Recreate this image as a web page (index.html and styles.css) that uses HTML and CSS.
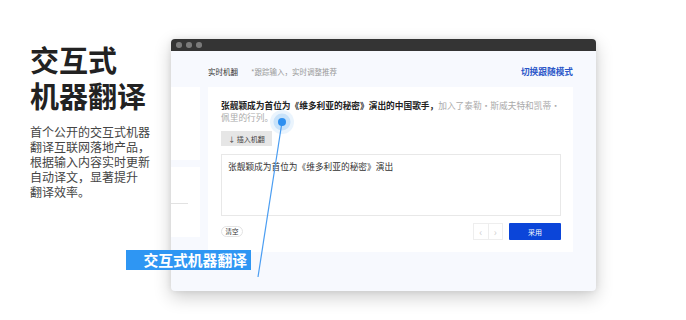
FILE: index.html
```html
<!DOCTYPE html>
<html lang="zh-CN">
<head>
    <meta charset="UTF-8">
    <meta name="viewport" content="width=device-width, initial-scale=1.0">
    <title>交互式机器翻译</title>
    <link rel="stylesheet" href="styles.css">
</head>
<body>
    <div class="page">
        <!-- Intro text -->
        <div class="intro">
            <h1>交互式<br>机器翻译</h1>
            <p>首个公开的交互式机器<br>翻译互联网落地产品，<br>根据输入内容实时更新<br>自动译文，显著提升<br>翻译效率。</p>
        </div>

        <!-- App window -->
        <div class="window">
            <div class="titlebar">
                <span class="dot"></span>
                <span class="dot"></span>
                <span class="dot"></span>
            </div>
            <div class="window-body">
                <div class="header">
                    <span class="mode">实时机翻</span>
                    <span class="hint">*跟踪输入，实时调整推荐</span>
                    <span class="switch">切换跟随模式</span>
                </div>
                <div class="content">
                    <div class="sidebar">
                        <div class="side-block"></div>
                        <div class="side-block lined"></div>
                    </div>
                    <div class="card">
                        <p class="suggest"><b>张靓颖成为首位为《维多利亚的秘密》演出的中国歌手，</b><span class="rest">加入了泰勒·斯威夫特和凯蒂·<br>佩里的行列。</span></p>
                        <button class="insert">↓ 插入机翻</button>
                        <div class="editor">张靓颖成为首位为《维多利亚的秘密》演出</div>
                        <div class="actions">
                            <button class="clear">清空</button>
                            <div class="right">
                                <div class="pager">
                                    <span>‹</span>
                                    <span>›</span>
                                </div>
                                <button class="apply">采用</button>
                            </div>
                        </div>
                    </div>
                </div>
            </div>
        </div>

        <!-- Callout over the window -->
        <svg class="callout-line" width="686" height="320" viewBox="0 0 686 320">
            <defs>
                <linearGradient id="fade" x1="0" x2="1" y1="0" y2="0">
                    <stop offset="0" stop-color="#4a9df2" stop-opacity="0.35"/>
                    <stop offset="1" stop-color="#4a9df2"/>
                </linearGradient>
            </defs>
            <line x1="100" y1="277" x2="258" y2="277" stroke="url(#fade)" stroke-width="1.2"/>
            <line x1="258" y1="277" x2="282" y2="122" stroke="#4a9df2" stroke-width="1.2"/>
            <circle cx="282" cy="122" r="12" fill="#2d8ff0" fill-opacity="0.1"/>
            <circle cx="282" cy="122" r="8.5" fill="#2d8ff0" fill-opacity="0.18"/>
            <circle cx="282" cy="122" r="4" fill="#2d8ff0"/>
        </svg>
        <div class="callout-label">交互式机器翻译</div>
    </div>
</body>
</html>
```

FILE: styles.css
```css
body {
    margin: 0;
    background: #fff;
    font-family: "Noto Sans CJK SC", "Noto Sans", sans-serif;
    color: #333;
}
.page {
    position: relative;
    width: 686px;
    height: 320px;
    display: flex;
    align-items: flex-start;
    overflow: hidden;
}
.intro {
    width: 171px;
    padding: 41px 0 0 30px;
    box-sizing: border-box;
}
.intro h1 {
    margin: 0;
    font-size: 29px;
    line-height: 36px;
    font-weight: 700;
    color: #222;
}
.intro p {
    margin: 11px 0 0;
    font-size: 12px;
    line-height: 15px;
    color: #444;
    white-space: nowrap;
}
.window {
    margin-top: 39px;
    width: 425px;
    height: 252px;
    border-radius: 4px;
    background: #f7f9fe;
    box-shadow: 0 6px 18px rgba(0, 0, 0, 0.2), 0 0 6px rgba(0, 0, 0, 0.08);
    overflow: hidden;
}
.titlebar {
    height: 12px;
    background: #343434;
    display: flex;
    align-items: center;
    gap: 4.5px;
    padding-left: 5px;
}
.dot {
    width: 5.5px;
    height: 5.5px;
    border-radius: 50%;
    background: #7a7a7a;
}
.header {
    height: 36px;
    padding: 4px 23px 0 37px;
    box-sizing: border-box;
    display: flex;
    align-items: center;
    font-size: 7.5px;
}
.mode {
    color: #333;
}
.hint {
    margin-left: 13px;
    color: #999;
}
.switch {
    margin-left: auto;
    font-size: 8.7px;
    font-weight: 700;
    color: #2a56c8;
}
.content {
    display: flex;
}
.sidebar {
    width: 29px;
    display: flex;
    flex-direction: column;
    gap: 7px;
}
.side-block {
    height: 73px;
    background: #fff;
}
.side-block.lined {
    height: 70px;
    background: linear-gradient(#fff 36px, #e2e2e2 36px, #e2e2e2 37px, #fff 37px);
    background-size: 17px 100%;
    background-repeat: no-repeat;
    background-color: #fff;
}
.card {
    margin-left: 8px;
    width: 365px;
    height: 165px;
    padding: 13px 12px 0 13px;
    box-sizing: border-box;
    background: #fff;
}
.suggest {
    margin: 0;
    font-size: 8.7px;
    line-height: 12px;
    color: #222;
    white-space: nowrap;
}
.suggest .rest {
    color: #aaa;
}
button {
    font-family: inherit;
    border: none;
    padding: 0;
    cursor: pointer;
}
.insert {
    display: block;
    margin-top: 7px;
    width: 51px;
    height: 15px;
    background: #e6e6e6;
    color: #444;
    font-size: 7px;
}
.editor {
    margin-top: 8px;
    height: 62px;
    border: 1px solid #e8e8e8;
    box-sizing: border-box;
    padding: 6px 6px;
    font-size: 8.7px;
    line-height: 11px;
    color: #333;
}
.actions {
    margin-top: 7px;
    display: flex;
    align-items: center;
    justify-content: space-between;
}
.clear {
    width: 22px;
    height: 11px;
    border: 1px solid #e3e3e3;
    border-radius: 6px;
    background: #fff;
    color: #333;
    font-size: 6.5px;
    line-height: 9px;
}
.right {
    display: flex;
    gap: 6px;
}
.pager {
    display: flex;
    width: 30px;
    height: 17px;
    border: 1px solid #eee;
    box-sizing: border-box;
}
.pager span {
    flex: 1;
    display: flex;
    align-items: center;
    justify-content: center;
    font-size: 10px;
    color: #d0d0d0;
}
.pager span + span {
    border-left: 1px solid #eee;
}
.apply {
    width: 52px;
    height: 17px;
    background: #0b45d9;
    color: #fff;
    font-size: 7px;
    border-radius: 1px;
}
.callout-line {
    position: absolute;
    left: 0;
    top: 0;
    pointer-events: none;
}
.callout-label {
    position: absolute;
    left: 126px;
    top: 250px;
    width: 125px;
    height: 19.5px;
    padding-right: 4px;
    box-sizing: border-box;
    background: #2e96f3;
    color: #fff;
    font-size: 14.8px;
    font-weight: 700;
    line-height: 19.5px;
    text-align: right;
}
```
